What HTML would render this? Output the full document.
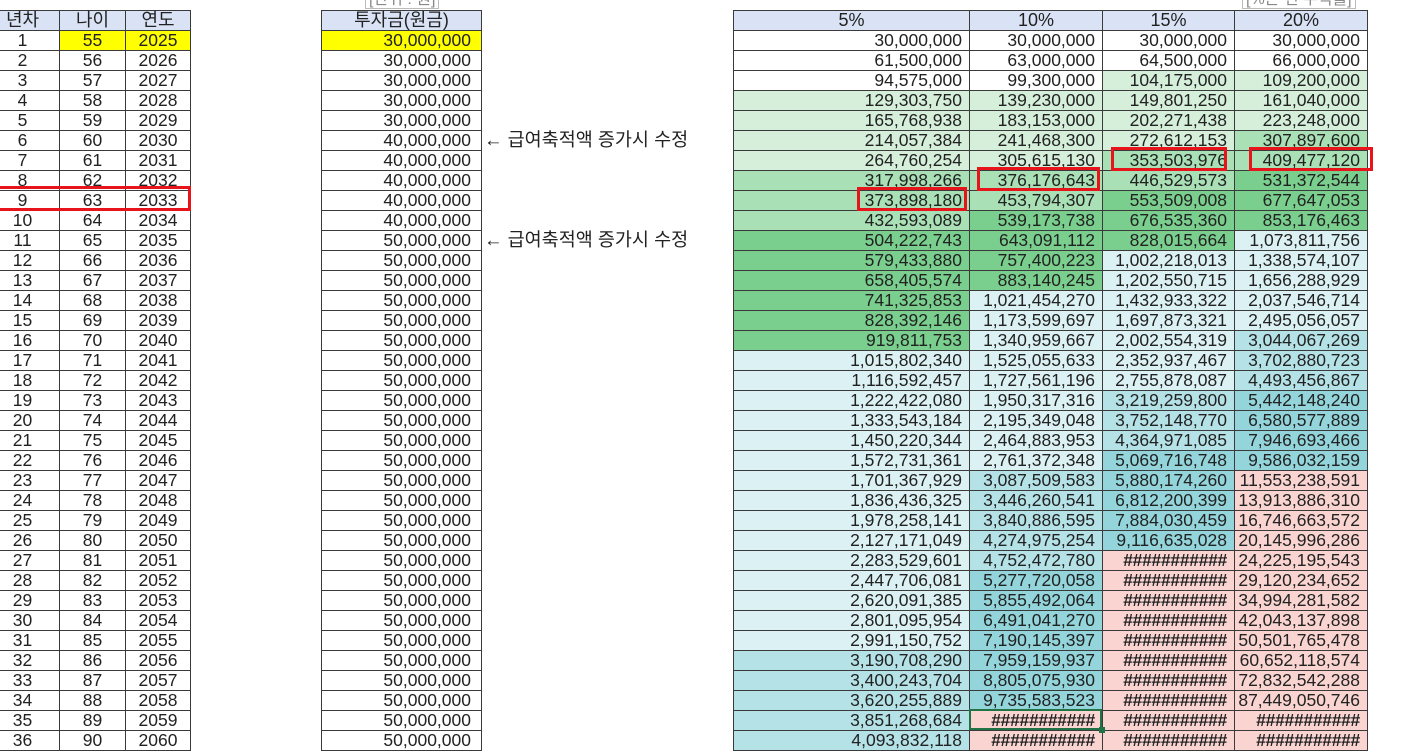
<!DOCTYPE html>
<html><head><meta charset="utf-8"><style>
body{margin:0;width:1402px;height:746px;overflow:hidden;background:#fff;position:relative;font-family:"Liberation Sans","Noto Sans CJK KR",sans-serif;font-size:17.5px;color:#222}
table{position:absolute;border-collapse:collapse;table-layout:fixed}
td{border:1px solid #3a3a3a;height:19px;line-height:19px;padding:0 7px 0 0;text-align:right;white-space:nowrap;overflow:hidden}
th{border:1px solid #3a3a3a;height:19px;line-height:19px;background:#d9e3f5;font-weight:normal;padding:0;font-size:18px}
.c td{text-align:center;padding:0}
.y{background:#ffff00}
.g1{background:#d6efdb}.g2{background:#a9e0b6}.g3{background:#7acf8e}
.c1{background:#dcf1f4}.c2{background:#b5e2e7}.c3{background:#93d5db}.p{background:#f9d4d1}
.h{font-weight:bold;letter-spacing:-0.3px}
.box{position:absolute;border:3.5px solid #e8141b;box-sizing:border-box}
.note{position:absolute;left:484px;font-size:18.5px;line-height:20px}
.lab{position:absolute;top:-10px;border:1px solid #bbb;color:#888;font-size:16px;line-height:17px;padding:0 3px}
</style></head><body>
<div class="lab" style="left:365px">[단위 : 원]</div>
<div class="lab" style="left:1242px">[%는 연 수익률]</div>

<table class="c" style="left:-15px;top:10px;width:205px">
<col style="width:74px"><col style="width:66px"><col style="width:65px">
<tr><th>년차</th><th>나이</th><th>연도</th></tr>
<tr><td>1</td><td class="y">55</td><td class="y">2025</td></tr>
<tr><td>2</td><td>56</td><td>2026</td></tr>
<tr><td>3</td><td>57</td><td>2027</td></tr>
<tr><td>4</td><td>58</td><td>2028</td></tr>
<tr><td>5</td><td>59</td><td>2029</td></tr>
<tr><td>6</td><td>60</td><td>2030</td></tr>
<tr><td>7</td><td>61</td><td>2031</td></tr>
<tr><td>8</td><td>62</td><td>2032</td></tr>
<tr><td>9</td><td>63</td><td>2033</td></tr>
<tr><td>10</td><td>64</td><td>2034</td></tr>
<tr><td>11</td><td>65</td><td>2035</td></tr>
<tr><td>12</td><td>66</td><td>2036</td></tr>
<tr><td>13</td><td>67</td><td>2037</td></tr>
<tr><td>14</td><td>68</td><td>2038</td></tr>
<tr><td>15</td><td>69</td><td>2039</td></tr>
<tr><td>16</td><td>70</td><td>2040</td></tr>
<tr><td>17</td><td>71</td><td>2041</td></tr>
<tr><td>18</td><td>72</td><td>2042</td></tr>
<tr><td>19</td><td>73</td><td>2043</td></tr>
<tr><td>20</td><td>74</td><td>2044</td></tr>
<tr><td>21</td><td>75</td><td>2045</td></tr>
<tr><td>22</td><td>76</td><td>2046</td></tr>
<tr><td>23</td><td>77</td><td>2047</td></tr>
<tr><td>24</td><td>78</td><td>2048</td></tr>
<tr><td>25</td><td>79</td><td>2049</td></tr>
<tr><td>26</td><td>80</td><td>2050</td></tr>
<tr><td>27</td><td>81</td><td>2051</td></tr>
<tr><td>28</td><td>82</td><td>2052</td></tr>
<tr><td>29</td><td>83</td><td>2053</td></tr>
<tr><td>30</td><td>84</td><td>2054</td></tr>
<tr><td>31</td><td>85</td><td>2055</td></tr>
<tr><td>32</td><td>86</td><td>2056</td></tr>
<tr><td>33</td><td>87</td><td>2057</td></tr>
<tr><td>34</td><td>88</td><td>2058</td></tr>
<tr><td>35</td><td>89</td><td>2059</td></tr>
<tr><td>36</td><td>90</td><td>2060</td></tr>
</table>

<table style="left:321px;top:10px;width:160px">
<col style="width:160px">
<tr><th>투자금(원금)</th></tr>
<tr><td class="y" style="padding-right:10px">30,000,000</td></tr>
<tr><td style="padding-right:10px">30,000,000</td></tr>
<tr><td style="padding-right:10px">30,000,000</td></tr>
<tr><td style="padding-right:10px">30,000,000</td></tr>
<tr><td style="padding-right:10px">30,000,000</td></tr>
<tr><td style="padding-right:10px">40,000,000</td></tr>
<tr><td style="padding-right:10px">40,000,000</td></tr>
<tr><td style="padding-right:10px">40,000,000</td></tr>
<tr><td style="padding-right:10px">40,000,000</td></tr>
<tr><td style="padding-right:10px">40,000,000</td></tr>
<tr><td style="padding-right:10px">50,000,000</td></tr>
<tr><td style="padding-right:10px">50,000,000</td></tr>
<tr><td style="padding-right:10px">50,000,000</td></tr>
<tr><td style="padding-right:10px">50,000,000</td></tr>
<tr><td style="padding-right:10px">50,000,000</td></tr>
<tr><td style="padding-right:10px">50,000,000</td></tr>
<tr><td style="padding-right:10px">50,000,000</td></tr>
<tr><td style="padding-right:10px">50,000,000</td></tr>
<tr><td style="padding-right:10px">50,000,000</td></tr>
<tr><td style="padding-right:10px">50,000,000</td></tr>
<tr><td style="padding-right:10px">50,000,000</td></tr>
<tr><td style="padding-right:10px">50,000,000</td></tr>
<tr><td style="padding-right:10px">50,000,000</td></tr>
<tr><td style="padding-right:10px">50,000,000</td></tr>
<tr><td style="padding-right:10px">50,000,000</td></tr>
<tr><td style="padding-right:10px">50,000,000</td></tr>
<tr><td style="padding-right:10px">50,000,000</td></tr>
<tr><td style="padding-right:10px">50,000,000</td></tr>
<tr><td style="padding-right:10px">50,000,000</td></tr>
<tr><td style="padding-right:10px">50,000,000</td></tr>
<tr><td style="padding-right:10px">50,000,000</td></tr>
<tr><td style="padding-right:10px">50,000,000</td></tr>
<tr><td style="padding-right:10px">50,000,000</td></tr>
<tr><td style="padding-right:10px">50,000,000</td></tr>
<tr><td style="padding-right:10px">50,000,000</td></tr>
<tr><td style="padding-right:10px">50,000,000</td></tr>
</table>
<div class="note" style="top:130px">← 급여축적액 증가시 수정</div>
<div class="note" style="top:230px">← 급여축적액 증가시 수정</div>

<table style="left:733px;top:10px;width:634px">
<col style="width:236px"><col style="width:133px"><col style="width:132px"><col style="width:133px">
<tr><th>5%</th><th>10%</th><th>15%</th><th>20%</th></tr>
<tr><td>30,000,000</td><td>30,000,000</td><td>30,000,000</td><td>30,000,000</td></tr>
<tr><td>61,500,000</td><td>63,000,000</td><td>64,500,000</td><td>66,000,000</td></tr>
<tr><td>94,575,000</td><td>99,300,000</td><td class="g1">104,175,000</td><td class="g1">109,200,000</td></tr>
<tr><td class="g1">129,303,750</td><td class="g1">139,230,000</td><td class="g1">149,801,250</td><td class="g1">161,040,000</td></tr>
<tr><td class="g1">165,768,938</td><td class="g1">183,153,000</td><td class="g1">202,271,438</td><td class="g1">223,248,000</td></tr>
<tr><td class="g1">214,057,384</td><td class="g1">241,468,300</td><td class="g1">272,612,153</td><td class="g2">307,897,600</td></tr>
<tr><td class="g1">264,760,254</td><td class="g1">305,615,130</td><td class="g2">353,503,976</td><td class="g2">409,477,120</td></tr>
<tr><td class="g2">317,998,266</td><td class="g2">376,176,643</td><td class="g2">446,529,573</td><td class="g3">531,372,544</td></tr>
<tr><td class="g2">373,898,180</td><td class="g2">453,794,307</td><td class="g3">553,509,008</td><td class="g3">677,647,053</td></tr>
<tr><td class="g2">432,593,089</td><td class="g3">539,173,738</td><td class="g3">676,535,360</td><td class="g3">853,176,463</td></tr>
<tr><td class="g3">504,222,743</td><td class="g3">643,091,112</td><td class="g3">828,015,664</td><td class="c1">1,073,811,756</td></tr>
<tr><td class="g3">579,433,880</td><td class="g3">757,400,223</td><td class="c1">1,002,218,013</td><td class="c1">1,338,574,107</td></tr>
<tr><td class="g3">658,405,574</td><td class="g3">883,140,245</td><td class="c1">1,202,550,715</td><td class="c1">1,656,288,929</td></tr>
<tr><td class="g3">741,325,853</td><td class="c1">1,021,454,270</td><td class="c1">1,432,933,322</td><td class="c1">2,037,546,714</td></tr>
<tr><td class="g3">828,392,146</td><td class="c1">1,173,599,697</td><td class="c1">1,697,873,321</td><td class="c1">2,495,056,057</td></tr>
<tr><td class="g3">919,811,753</td><td class="c1">1,340,959,667</td><td class="c1">2,002,554,319</td><td class="c2">3,044,067,269</td></tr>
<tr><td class="c1">1,015,802,340</td><td class="c1">1,525,055,633</td><td class="c1">2,352,937,467</td><td class="c2">3,702,880,723</td></tr>
<tr><td class="c1">1,116,592,457</td><td class="c1">1,727,561,196</td><td class="c1">2,755,878,087</td><td class="c2">4,493,456,867</td></tr>
<tr><td class="c1">1,222,422,080</td><td class="c1">1,950,317,316</td><td class="c2">3,219,259,800</td><td class="c3">5,442,148,240</td></tr>
<tr><td class="c1">1,333,543,184</td><td class="c1">2,195,349,048</td><td class="c2">3,752,148,770</td><td class="c3">6,580,577,889</td></tr>
<tr><td class="c1">1,450,220,344</td><td class="c1">2,464,883,953</td><td class="c2">4,364,971,085</td><td class="c3">7,946,693,466</td></tr>
<tr><td class="c1">1,572,731,361</td><td class="c1">2,761,372,348</td><td class="c3">5,069,716,748</td><td class="c3">9,586,032,159</td></tr>
<tr><td class="c1">1,701,367,929</td><td class="c2">3,087,509,583</td><td class="c3">5,880,174,260</td><td class="p">11,553,238,591</td></tr>
<tr><td class="c1">1,836,436,325</td><td class="c2">3,446,260,541</td><td class="c3">6,812,200,399</td><td class="p">13,913,886,310</td></tr>
<tr><td class="c1">1,978,258,141</td><td class="c2">3,840,886,595</td><td class="c3">7,884,030,459</td><td class="p">16,746,663,572</td></tr>
<tr><td class="c1">2,127,171,049</td><td class="c2">4,274,975,254</td><td class="c3">9,116,635,028</td><td class="p">20,145,996,286</td></tr>
<tr><td class="c1">2,283,529,601</td><td class="c2">4,752,472,780</td><td class="p h">###########</td><td class="p">24,225,195,543</td></tr>
<tr><td class="c1">2,447,706,081</td><td class="c3">5,277,720,058</td><td class="p h">###########</td><td class="p">29,120,234,652</td></tr>
<tr><td class="c1">2,620,091,385</td><td class="c3">5,855,492,064</td><td class="p h">###########</td><td class="p">34,994,281,582</td></tr>
<tr><td class="c1">2,801,095,954</td><td class="c3">6,491,041,270</td><td class="p h">###########</td><td class="p">42,043,137,898</td></tr>
<tr><td class="c1">2,991,150,752</td><td class="c3">7,190,145,397</td><td class="p h">###########</td><td class="p">50,501,765,478</td></tr>
<tr><td class="c2">3,190,708,290</td><td class="c3">7,959,159,937</td><td class="p h">###########</td><td class="p">60,652,118,574</td></tr>
<tr><td class="c2">3,400,243,704</td><td class="c3">8,805,075,930</td><td class="p h">###########</td><td class="p">72,832,542,288</td></tr>
<tr><td class="c2">3,620,255,889</td><td class="c3">9,735,583,523</td><td class="p h">###########</td><td class="p">87,449,050,746</td></tr>
<tr><td class="c2">3,851,268,684</td><td class="p h">###########</td><td class="p h">###########</td><td class="p h">###########</td></tr>
<tr><td class="c2">4,093,832,118</td><td class="p h">###########</td><td class="p h">###########</td><td class="p h">###########</td></tr>
</table>
<div style="position:absolute;left:969px;top:709px;width:133px;height:21px;border:2px solid #217346;box-sizing:border-box"></div>
<div style="position:absolute;left:1099px;top:727px;width:6px;height:6px;background:#217346"></div>

<div class="box" style="left:-5px;top:186px;width:196px;height:25px"></div>
<div class="box" style="left:857px;top:187px;width:110px;height:24px"></div>
<div class="box" style="left:977px;top:167px;width:123px;height:24px"></div>
<div class="box" style="left:1111px;top:147px;width:116px;height:24px"></div>
<div class="box" style="left:1249px;top:147px;width:124px;height:24px"></div>
</body></html>
